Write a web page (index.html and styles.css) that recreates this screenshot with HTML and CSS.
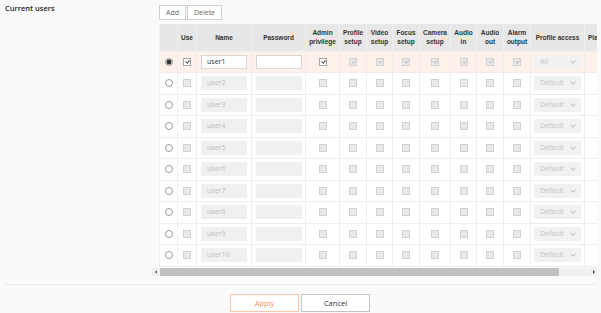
FILE: index.html
```html
<!DOCTYPE html>
<html>
<head>
<meta charset="utf-8">
<link rel="stylesheet" href="styles.css">
</head>
<body>
<div class="section">
  <div class="label">Current users</div>
  <div class="content">
    <div class="toolbar">
      <button class="btn">Add</button>
      <button class="btn">Delete</button>
    </div>
    <div class="clip">
      <table class="users">
        <colgroup>
          <col style="width:18px"><col style="width:19px"><col style="width:55px"><col style="width:54px">
          <col style="width:34px"><col style="width:27px"><col style="width:26px"><col style="width:27px">
          <col style="width:31px"><col style="width:26px"><col style="width:27px"><col style="width:27px">
          <col style="width:54px"><col style="width:40px">
        </colgroup>
        <thead>
          <tr>
            <th></th><th>Use</th><th>Name</th><th>Password</th>
            <th>Admin<br>privilege</th><th>Profile<br>setup</th><th>Video<br>setup</th><th>Focus<br>setup</th>
            <th>Camera<br>setup</th><th>Audio<br>in</th><th>Audio<br>out</th><th>Alarm<br>output</th>
            <th>Profile access</th><th class="pla">Pla</th>
          </tr>
        </thead>
        <tbody>
          <tr class="sel">
            <td><span class="radio on"></span></td>
            <td><span class="cb active on"></span></td>
            <td><span class="field active">user1</span></td>
            <td><span class="field active"></span></td>
            <td><span class="cb active on"></span></td>
            <td><span class="cb on"></span></td><td><span class="cb on"></span></td><td><span class="cb on"></span></td>
            <td><span class="cb on"></span></td><td><span class="cb on"></span></td><td><span class="cb on"></span></td><td><span class="cb on"></span></td>
            <td><span class="select"><span>All</span><svg class="chev" width="6" height="4" viewBox="0 0 6 4"><path d="M0.5 0.8 L3 3.2 L5.5 0.8" fill="none" stroke="#aaa" stroke-width="0.9"/></svg></span></td>
            <td></td>
          </tr>
          <tr>
            <td><span class="radio"></span></td><td><span class="cb"></span></td>
            <td><span class="field">user2</span></td><td><span class="field"></span></td>
            <td><span class="cb"></span></td><td><span class="cb"></span></td><td><span class="cb"></span></td><td><span class="cb"></span></td>
            <td><span class="cb"></span></td><td><span class="cb"></span></td><td><span class="cb"></span></td><td><span class="cb"></span></td>
            <td><span class="select"><span>Default</span><svg class="chev" width="6" height="4" viewBox="0 0 6 4"><path d="M0.5 0.8 L3 3.2 L5.5 0.8" fill="none" stroke="#aaa" stroke-width="0.9"/></svg></span></td><td></td>
          </tr>
          <tr>
            <td><span class="radio"></span></td><td><span class="cb"></span></td>
            <td><span class="field">user3</span></td><td><span class="field"></span></td>
            <td><span class="cb"></span></td><td><span class="cb"></span></td><td><span class="cb"></span></td><td><span class="cb"></span></td>
            <td><span class="cb"></span></td><td><span class="cb"></span></td><td><span class="cb"></span></td><td><span class="cb"></span></td>
            <td><span class="select"><span>Default</span><svg class="chev" width="6" height="4" viewBox="0 0 6 4"><path d="M0.5 0.8 L3 3.2 L5.5 0.8" fill="none" stroke="#aaa" stroke-width="0.9"/></svg></span></td><td></td>
          </tr>
          <tr>
            <td><span class="radio"></span></td><td><span class="cb"></span></td>
            <td><span class="field">user4</span></td><td><span class="field"></span></td>
            <td><span class="cb"></span></td><td><span class="cb"></span></td><td><span class="cb"></span></td><td><span class="cb"></span></td>
            <td><span class="cb"></span></td><td><span class="cb"></span></td><td><span class="cb"></span></td><td><span class="cb"></span></td>
            <td><span class="select"><span>Default</span><svg class="chev" width="6" height="4" viewBox="0 0 6 4"><path d="M0.5 0.8 L3 3.2 L5.5 0.8" fill="none" stroke="#aaa" stroke-width="0.9"/></svg></span></td><td></td>
          </tr>
          <tr>
            <td><span class="radio"></span></td><td><span class="cb"></span></td>
            <td><span class="field">user5</span></td><td><span class="field"></span></td>
            <td><span class="cb"></span></td><td><span class="cb"></span></td><td><span class="cb"></span></td><td><span class="cb"></span></td>
            <td><span class="cb"></span></td><td><span class="cb"></span></td><td><span class="cb"></span></td><td><span class="cb"></span></td>
            <td><span class="select"><span>Default</span><svg class="chev" width="6" height="4" viewBox="0 0 6 4"><path d="M0.5 0.8 L3 3.2 L5.5 0.8" fill="none" stroke="#aaa" stroke-width="0.9"/></svg></span></td><td></td>
          </tr>
          <tr>
            <td><span class="radio"></span></td><td><span class="cb"></span></td>
            <td><span class="field">user6</span></td><td><span class="field"></span></td>
            <td><span class="cb"></span></td><td><span class="cb"></span></td><td><span class="cb"></span></td><td><span class="cb"></span></td>
            <td><span class="cb"></span></td><td><span class="cb"></span></td><td><span class="cb"></span></td><td><span class="cb"></span></td>
            <td><span class="select"><span>Default</span><svg class="chev" width="6" height="4" viewBox="0 0 6 4"><path d="M0.5 0.8 L3 3.2 L5.5 0.8" fill="none" stroke="#aaa" stroke-width="0.9"/></svg></span></td><td></td>
          </tr>
          <tr>
            <td><span class="radio"></span></td><td><span class="cb"></span></td>
            <td><span class="field">user7</span></td><td><span class="field"></span></td>
            <td><span class="cb"></span></td><td><span class="cb"></span></td><td><span class="cb"></span></td><td><span class="cb"></span></td>
            <td><span class="cb"></span></td><td><span class="cb"></span></td><td><span class="cb"></span></td><td><span class="cb"></span></td>
            <td><span class="select"><span>Default</span><svg class="chev" width="6" height="4" viewBox="0 0 6 4"><path d="M0.5 0.8 L3 3.2 L5.5 0.8" fill="none" stroke="#aaa" stroke-width="0.9"/></svg></span></td><td></td>
          </tr>
          <tr>
            <td><span class="radio"></span></td><td><span class="cb"></span></td>
            <td><span class="field">user8</span></td><td><span class="field"></span></td>
            <td><span class="cb"></span></td><td><span class="cb"></span></td><td><span class="cb"></span></td><td><span class="cb"></span></td>
            <td><span class="cb"></span></td><td><span class="cb"></span></td><td><span class="cb"></span></td><td><span class="cb"></span></td>
            <td><span class="select"><span>Default</span><svg class="chev" width="6" height="4" viewBox="0 0 6 4"><path d="M0.5 0.8 L3 3.2 L5.5 0.8" fill="none" stroke="#aaa" stroke-width="0.9"/></svg></span></td><td></td>
          </tr>
          <tr>
            <td><span class="radio"></span></td><td><span class="cb"></span></td>
            <td><span class="field">user9</span></td><td><span class="field"></span></td>
            <td><span class="cb"></span></td><td><span class="cb"></span></td><td><span class="cb"></span></td><td><span class="cb"></span></td>
            <td><span class="cb"></span></td><td><span class="cb"></span></td><td><span class="cb"></span></td><td><span class="cb"></span></td>
            <td><span class="select"><span>Default</span><svg class="chev" width="6" height="4" viewBox="0 0 6 4"><path d="M0.5 0.8 L3 3.2 L5.5 0.8" fill="none" stroke="#aaa" stroke-width="0.9"/></svg></span></td><td></td>
          </tr>
          <tr>
            <td><span class="radio"></span></td><td><span class="cb"></span></td>
            <td><span class="field">user10</span></td><td><span class="field"></span></td>
            <td><span class="cb"></span></td><td><span class="cb"></span></td><td><span class="cb"></span></td><td><span class="cb"></span></td>
            <td><span class="cb"></span></td><td><span class="cb"></span></td><td><span class="cb"></span></td><td><span class="cb"></span></td>
            <td><span class="select"><span>Default</span><svg class="chev" width="6" height="4" viewBox="0 0 6 4"><path d="M0.5 0.8 L3 3.2 L5.5 0.8" fill="none" stroke="#aaa" stroke-width="0.9"/></svg></span></td><td></td>
          </tr>
        </tbody>
      </table>
    </div>
    <div class="hscroll">
      <span class="sb-btn"><span class="tri-left"></span></span>
      <span class="sb-thumb"></span>
      <span class="sb-rest"></span>
      <span class="sb-btn"><span class="tri-right"></span></span>
    </div>
  </div>
</div>
<div class="divider"></div>
<div class="actions">
  <button class="act apply">Apply</button>
  <button class="act cancel">Cancel</button>
</div>
</body>
</html>
```

FILE: styles.css
```css
* { box-sizing: border-box; }
html, body { margin: 0; padding: 0; }
body {
  background: #fafafa;
  font-family: "Open Sans", "Liberation Sans", sans-serif;
  color: #333;
  width: 601px;
  height: 313px;
  overflow: hidden;
}
.section {
  display: flex;
  padding-top: 5px;
}
.label {
  width: 152px;
  padding-left: 5px;
  font-size: 7.5px;
  font-weight: 600;
  line-height: 9px;
  margin-top: -1px;
  color: #222;
}
.content {
  width: 445px;
}
.toolbar {
  display: flex;
  gap: 1px;
  padding-left: 7px;
  height: 15px;
}
.btn {
  font-family: "Open Sans", sans-serif;
  font-size: 7px;
  color: #666;
  background: #fff;
  border: 1px solid #d0d0d0;
  padding: 0;
  height: 15px;
  line-height: 12px;
}
.toolbar .btn:first-child { width: 27px; }
.toolbar .btn:last-child { width: 35px; }
.clip {
  overflow: hidden;
  padding-left: 7px;
  margin-top: 4px;
}
.users {
  table-layout: fixed;
  border-collapse: collapse;
  width: 465px;
  background: #fff;
}
.users th {
  background: #e7e7e7;
  height: 27px;
  font-family: "Liberation Sans", Arial, sans-serif;
  font-weight: bold;
  font-size: 6.5px;
  line-height: 9.5px;
  color: #333;
  border: 1px solid #f0f0f0;
  border-top: none;
  padding: 0;
  text-align: center;
  white-space: nowrap;
  overflow: hidden;
}
.users th.pla { text-align: left; padding-left: 3px; }
.users td {
  height: 21.5px;
  padding: 0;
  border: 1px solid #eeeeee;
  text-align: center;
  vertical-align: middle;
  line-height: 0;
}
.users tr.sel td { background: #fdf1ea; border-color: #f5e9e2 #eeeeee; }
.cb {
  display: inline-block;
  width: 8px;
  height: 8px;
  border: 1px solid #d2d2d2;
  background: #e9e9e9;
  position: relative;
  vertical-align: middle;
}
.cb.on::after {
  content: "";
  position: absolute;
  left: 2.3px;
  top: 0.6px;
  width: 1.6px;
  height: 3.4px;
  border: solid #c4c4c4;
  border-width: 0 1px 1px 0;
  transform: rotate(40deg);
}
.cb.active { background: #fff; border-color: #a8a8a8; }
.cb.active.on::after { border-color: #555; }
.radio {
  display: inline-block;
  width: 8px;
  height: 8px;
  border-radius: 50%;
  border: 1px solid #9a9a9a;
  background: #fff;
  vertical-align: middle;
}
.radio.on {
  border-color: #bbb;
  background: #333;
  box-shadow: inset 0 0 0 0.6px #ddd;
}
.field {
  display: inline-flex;
  align-items: center;
  width: 46px;
  height: 14px;
  padding-left: 5px;
  background: #f0f0f0;
  border: 1px solid #f0f0f0;
  color: #bdbdbd;
  font-size: 7px;
  line-height: 12px;
  text-align: left;
  vertical-align: middle;
}
.field.active {
  background: #fff;
  border-color: #d8d8d8;
  color: #333;
}
.select {
  display: inline-flex;
  align-items: center;
  justify-content: space-between;
  width: 47px;
  height: 14px;
  padding: 0 5px 0 6px;
  background: #f1f1f1;
  color: #c3c3c3;
  font-size: 7px;
  line-height: 12px;
  vertical-align: middle;
}
.chev { display: block; }
.hscroll {
  display: flex;
  height: 8px;
  margin-top: 1px;
  background: #f1f1f1;
}
.sb-btn {
  width: 7px;
  display: flex;
  align-items: center;
  justify-content: center;
  background: #f1f1f1;
}
.tri-left {
  width: 0; height: 0;
  border-top: 2px solid transparent;
  border-bottom: 2px solid transparent;
  border-right: 2px solid #666;
}
.tri-right {
  width: 0; height: 0;
  border-top: 2px solid transparent;
  border-bottom: 2px solid transparent;
  border-left: 2px solid #444;
}
.sb-thumb {
  width: 399px;
  margin-left: 1px;
  background: #c1c1c1;
}
.sb-rest { flex: 1; }
.divider {
  margin: 8px 4px 0 4px;
  height: 1px;
  background: #ececec;
}
.actions {
  display: flex;
  justify-content: center;
  gap: 2px;
  margin-top: 9px;
  padding-right: 1px;
}
.act {
  width: 69px;
  height: 18px;
  padding: 0;
  background: #fff;
  font-family: "Open Sans", sans-serif;
  font-size: 7.5px;
}
.apply {
  border: 1px solid #f8c9a8;
  color: #f0935a;
}
.cancel {
  border: 1px solid #c4c4c4;
  color: #333;
}
```
